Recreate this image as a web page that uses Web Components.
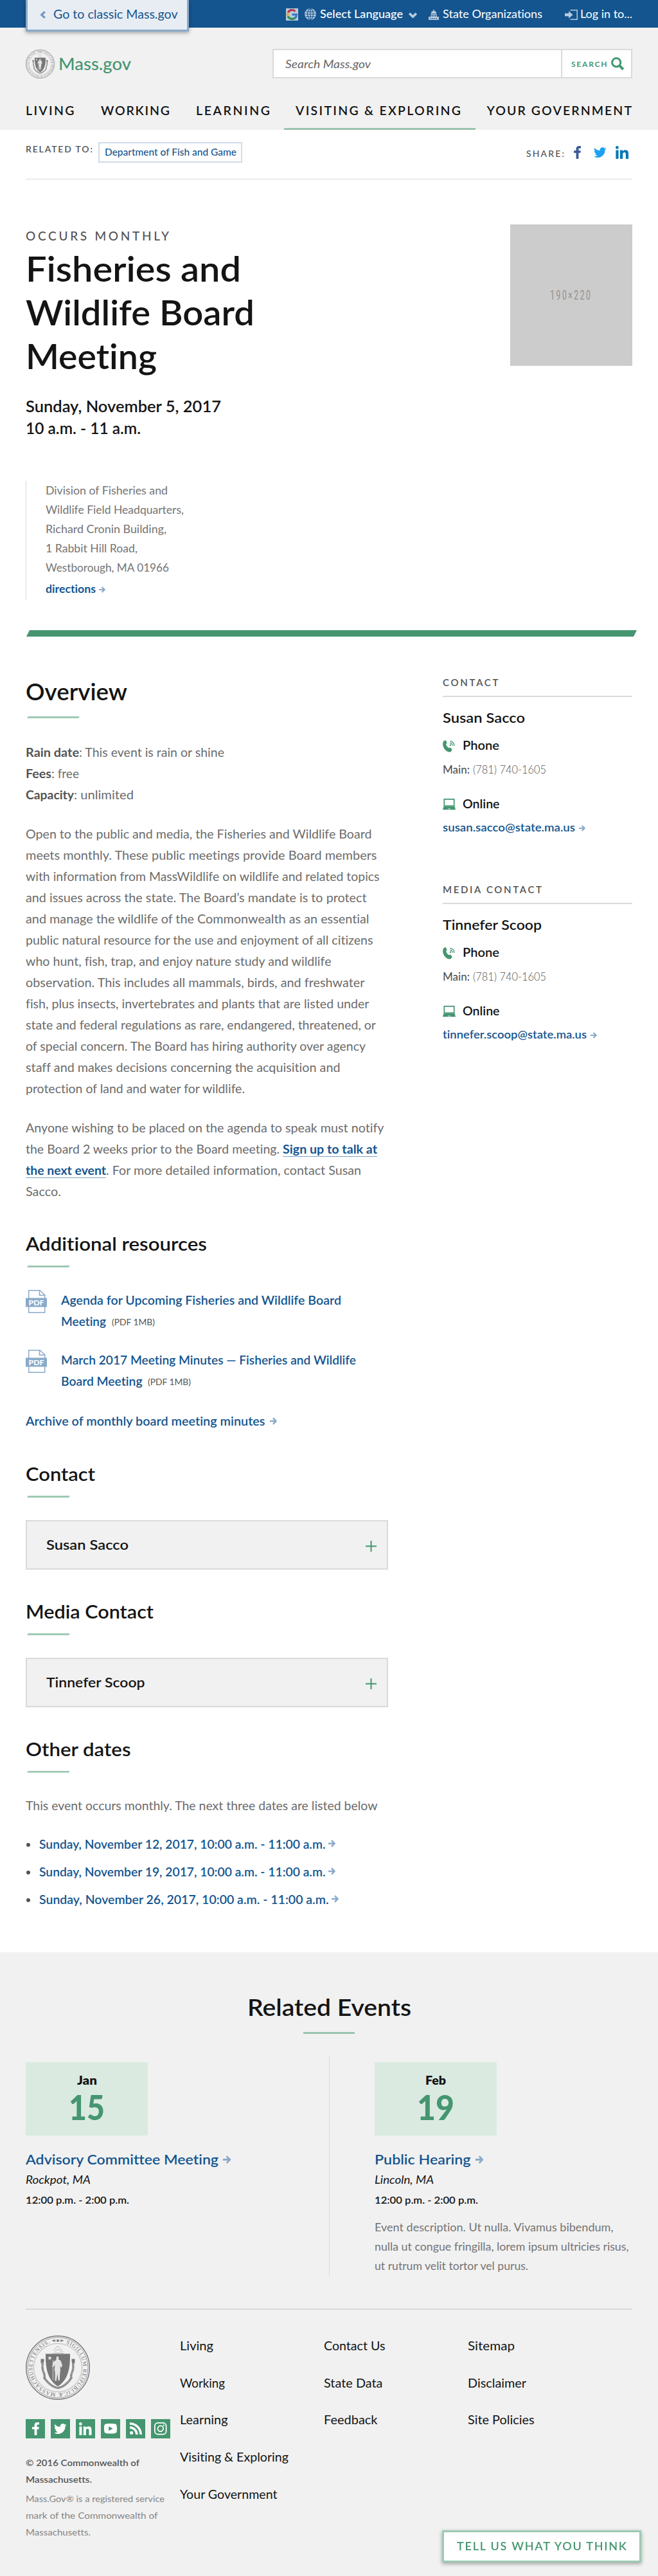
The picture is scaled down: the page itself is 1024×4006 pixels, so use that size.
<!DOCTYPE html>
<html lang="en">
<head>
<meta charset="utf-8">
<title>Fisheries and Wildlife Board Meeting</title>
<style>
html,body{margin:0;padding:0;background:#fff}
body{font-family:Lato,"Open Sans",sans-serif;color:#141414;width:1024px;
--green:#459670;--mint:#9ec9b3;--blue:#14558f;--sky:#8aaac9;--line:#dadada;--gray:#535353;--book:#6c6c6c;--light:#747474}
</style>
</head>
<body>
<mass-page></mass-page>
<script>
const define = (name, css, html) => customElements.define(name, class extends HTMLElement {
  connectedCallback() {
    if (this.shadowRoot) return;
    const t = document.createElement('template');
    t.innerHTML = `<style>:host{display:block}*{box-sizing:border-box}${css}</style>${html}`;
    this.attachShadow({mode: 'open'}).appendChild(t.content.cloneNode(true));
  }
});

/* Icons */
const FB = '<path fill="currentColor" d="M3.6 20v-9.2H0V7.3h3.6V4.6C3.6 1.6 5.4 0 8.2 0c1.3 0 2.300.1 2.800.2v3.200H9.200c-1.500 0-1.800.7-1.800 1.800v2.100H10.800l-.5 3.500H7.400V20z"/>';
const TW = '<path fill="currentColor" d="M19.500 2.200c-.7.300-1.500.500-2.300.600.800-.5 1.500-1.300 1.800-2.200-.8.500-1.600.800-2.500 1A4 4 0 0 0 9.600 5.200C6.300 5 3.400 3.400 1.400 1 .3 2.900.900 5.100 2.600 6.300c-.6 0-1.200-.2-1.800-.5 0 1.900 1.300 3.600 3.200 4-.6.1-1.200.200-1.800.1.500 1.600 2 2.700 3.700 2.800A8 8 0 0 1 0 14.300 11.400 11.400 0 0 0 17.500 4.200c.8-.6 1.500-1.300 2-2z"/>';
const IN = '<path fill="currentColor" d="M.4 6.600h4.100V20H.4zM2.400 0a2.400 2.400 0 1 1 0 4.800 2.400 2.400 0 0 1 0-4.800zM7 6.600h4v1.900c.6-1.100 2-2.200 4-2.200 4.300 0 5 2.800 5 6.400V20h-4.100v-6.500c0-1.600 0-3.600-2.200-3.600S11.100 11.600 11.100 13.400V20H7z"/>';
const ICONS = {
  arrow: ['0 0 11 11', '<path d="M0 5.500h8M5 1l4.500 4.500L5 10" fill="none" stroke="currentColor" stroke-width="2.400"/>'],
  left: ['0 0 9 12', '<path d="M7.800 1.200 2.600 6l5.200 4.800" fill="none" stroke="currentColor" stroke-width="3.200"/>'],
  down: ['0 0 13 10', '<path d="M1.200 1.800 6.500 7l5.300-5.200" fill="none" stroke="currentColor" stroke-width="3.600"/>'],
  google: ['0 0 19 19', '<path fill="#b9cbdd" d="M0 0h19v19H0z"/><g fill="none" stroke-width="3.300"><path stroke="#b23a4c" d="M3.400 6.600C5 2.300 11.500 1.200 14.500 4.700"/><path stroke="#d9a93a" d="M3.300 12.800A8 8 0 0 1 3.300 6.300"/><path stroke="#2f8f5e" d="M3.200 12.500C5.200 17 11.300 17.600 14.300 14.700"/><path stroke="#3f78c4" d="M9.500 9.700h6.900c0 2-.7 3.900-2.300 5.200"/></g>'],
  globe: ['0 0 18 18', '<circle cx="9" cy="9" r="8.900" fill="#b9cbdd"/><g fill="none" stroke="#14558f" stroke-width="1.100"><path d="M9 .5v17M.5 9h17M2 5.200h14M2 12.800h14"/><ellipse cx="9" cy="9" rx="4.400" ry="8.400"/></g>'],
  capitol: ['0 0 16 16', '<path fill="currentColor" d="M7.300 0h1.400v2C11 2.300 12.200 3.900 12.300 6H3.700C3.800 3.900 5 2.300 7.300 2zM3.300 6.700h9.400V8H3.300zM3.500 8.500h1.700v2.500H3.500zM6.100 8.500h1.500v2.500H6.100zM8.500 8.500h1.500v2.500H8.500zM10.900 8.500h1.700v2.500h-1.700zM0 11h16v5H0z"/><path stroke="#14558f" stroke-width="1.500" stroke-dasharray="1.500 1.500" d="M2 13.700h12.500"/>'],
  login: ['0 0 20 16', '<path fill="currentColor" d="M0 5.800h6V2.300L12.500 8 6 13.700v-3.500H0z"/><path fill="none" stroke="currentColor" stroke-width="1.500" d="M8.500.8h10.700v14.400H8.500"/>'],
  search: ['0 0 20 20', '<circle cx="8.200" cy="8.200" r="6.600" fill="none" stroke="currentColor" stroke-width="3"/><path d="m12.700 12.700 6.200 6.200" stroke="currentColor" stroke-width="4"/>'],
  fb: ['0 0 11 20', FB], tw: ['0 0 19.500 16', TW], in: ['0 0 20 20', IN],
  phone: ['0 0 19 19', '<path fill="currentColor" d="M1.200 1.800C2.300.8 4.200-.6 5.100.8l1.300 3c.4 1-.3 1.600-1.200 2.300C5.200 8.500 7.300 11.300 9.400 12.200c.9-.6 1.700-1.100 2.500-.5l2.300 2.200c.9 1.100-.3 2.800-1.600 4C10.500 19.300 6.300 18.300 3.300 14.500.2 10.600-.9 5 1.200 1.800z"/><circle cx="12" cy="7.700" r="1.200" fill="currentColor"/><path fill="none" stroke="currentColor" stroke-width="1.300" d="M11.200 4.500a3.600 3.600 0 0 1 3.900 4.100M11.200 1.700a6.300 6.300 0 0 1 6.500 7.200"/>'],
  laptop: ['0 0 20 18', '<path fill="none" stroke="currentColor" stroke-width="1.700" d="M2.300.9h15.400v10.400H2.300z"/><path fill="currentColor" d="M1.400 12.300h17.200L20 17.700H0z"/><path fill="#fff" opacity=".7" d="M8 15.800h4v1.200H8z"/>'],
  plus: ['0 0 17 17', '<path stroke="currentColor" stroke-width="2" d="M8.500 0v17M0 8.500h17"/>'],
  pdf: ['0 0 33 36', '<path fill="#fff" stroke="#8aaac9" stroke-width="1.500" d="M4.700.8h17.500l7.500 7v27.400H4.700z"/><path fill="none" stroke="#8aaac9" stroke-width="1.500" d="M21.500.8v7.500h8"/><path fill="#8aaac9" d="M0 12.500h33v14H0z"/><text x="16.500" y="23.800" text-anchor="middle" textLength="24" lengthAdjust="spacingAndGlyphs" font-family="Lato" font-size="11.500" font-weight="900" fill="#fff">PDF</text>'],
  yt: ['0 0 20 16', '<path fill="currentColor" d="M4 .3C8 0 12 0 16 .3c3 .2 4 1.500 4 7.700s-1 7.500-4 7.700c-4 .3-8 .3-12 0C1 15.500 0 14.200 0 8S1 .5 4 .3z"/><path fill="#459670" d="m7.200 4.500 6.500 3.500-6.500 3.500z"/>'],
  rss: ['0 0 20 20', '<circle cx="2.800" cy="17.200" r="2.700" fill="currentColor"/><path fill="none" stroke="currentColor" stroke-width="3.700" d="M0 8.500A11.500 11.500 0 0 1 11.500 20M0 2a18 18 0 0 1 18 18"/>'],
  ig: ['0 0 20 20', '<g fill="none" stroke="currentColor" stroke-width="1.800"><rect x=".9" y=".9" width="18.200" height="18.200" rx="5"/><circle cx="10" cy="10" r="4.400"/></g><circle cx="15.200" cy="4.800" r="1.200" fill="currentColor"/>']
};
customElements.define('ui-icon', class extends HTMLElement {
  connectedCallback() {
    if (this.shadowRoot) return;
    const [box, art] = ICONS[this.getAttribute('name')];
    const [w, h] = [this.getAttribute('w'), this.getAttribute('h')];
    this.attachShadow({mode: 'open'}).innerHTML =
      `<style>:host{display:block;flex:none;width:${w}px;height:${h}px}svg{display:block}</style><svg width="${w}" height="${h}" viewBox="${box}" preserveAspectRatio="none">${art}</svg>`;
  }
});

/* State seal */
customElements.define('state-seal', class extends HTMLElement {
  connectedCallback() {
    if (this.shadowRoot) return;
    const s = this.getAttribute('size');
    this.attachShadow({mode: 'open'}).innerHTML = `<style>:host{display:block;flex:none;width:${s}px;height:${s}px}svg{display:block}</style>
<svg width="${s}" height="${s}" viewBox="0 0 100 100">
<defs><path id="ring" d="M50 10.500a39.500 39.500 0 1 1-.01 0"/></defs>
<g fill="none" stroke="#777"><circle cx="50" cy="50" r="49.300" stroke-width="1.400"/><circle cx="50" cy="50" r="47" stroke-width=".7"/><circle cx="50" cy="50" r="37.500" stroke-width="1.200" stroke-dasharray="1 .7" opacity=".65"/></g>
<text font-family="Liberation Serif" font-size="8.500" fill="#6f6f6f"><textPath href="#ring" startOffset="13" textLength="222" lengthAdjust="spacing">SIGILLUM REIPUBLICÆ MASSACHUSETTENSIS.</textPath></text>
<g fill="#777"><circle cx="50" cy="8" r="2"/><path d="m40.500 8 5-2v4zM59.500 8l-5-2v4zM47 7.500h-2v1h2zM53 7.500h2v1h-2z"/></g>
<path fill="none" stroke="#777" stroke-width="3.400" stroke-dasharray="1.600 .4" d="M26 37c1 6-1 11 1 18 2 5 3 8 2 11 5 7 12 14 21 15.500 9-1.500 16-8 21-15.500-1-3 0-6 2-11 2-7 0-12 1-18"/>
<path fill="#777" d="M23.500 36.500h5v4l-5 3zM76.500 36.500h-5v4l5 3z"/>
<path fill="none" stroke="#aaa" stroke-width=".8" d="M42 28c3-1 13-1 17 0M44 24c2-5 4-7 7-7 2 3 5 5 7 9M46 25l4-4 5 4"/>
<path fill="#777" d="M31 28.500h38c.3 20-2 40-19 50.500C33 68.500 30.700 48.500 31 28.500z"/>
<path fill="#f1f1f1" d="m37.500 31.500.8 2.500h2.600l-2.100 1.500.8 2.500-2.100-1.500-2.100 1.500.8-2.500-2.100-1.500h2.600z"/>
<path fill="#e4e4e4" d="M48 33l2-.8 1.500 2-.3 3.300 3.300 1.500 2.600 7.500-2.200 4-1.500-3 .6 6.500-.6 4-.6 12h-2l-1.400-11-1.600 11.500h-2.300l.2-12-.9-5 .6-8-2.400 3.500-2-.6 2.400-7.500 4-3z"/>
<path stroke="#e4e4e4" stroke-width=".8" d="M42.500 38v31"/></svg>`;
  }
});

const SIDE_CSS = `
.cap{margin-top:var(--top,59.200px);color:var(--gray)}
hr{border:0;height:2px;margin:8.800px 0 16.700px;background:var(--line)}
.r{display:flex}.k{margin-top:16px}.m{margin-top:12.400px;color:var(--gray)}
.o{margin-top:28.600px}.e{margin-top:12.500px;color:var(--blue)}
ui-icon{color:var(--green)}.e ui-icon{color:var(--sky);margin:9px 0 0 6px}`;
customElements.define('side-contact', class extends HTMLElement {
  connectedCallback() {
    if (this.shadowRoot) return;
    const a = n => this.getAttribute(n);
    this.attachShadow({mode: 'open'}).innerHTML = `<style>:host{display:block}${SIDE_CSS}</style>
<text-run class="cap" f="15" l="24" wt="600" w="${a('cw')}">${a('cap')}</text-run><hr>
<text-run f="20.500" l="30" wt="600" w="${a('nw')}">${a('name')}</text-run>
<div class="r k"><ui-icon name="phone" w="19" h="19" style="margin-top:4px"></ui-icon><text-run f="19" l="24" wt="600" w="57" style="margin-left:11.500px">Phone</text-run></div>
<div class="r m"><text-run f="18" l="26" wt="500" w="42">Main:</text-run><text-run f="18" l="26" wt="300" w="114" style="margin-left:5px">(781) 740-1605</text-run></div>
<div class="r o"><ui-icon name="laptop" w="20" h="17.500" style="margin-top:4.500px"></ui-icon><text-run f="19" l="24" wt="600" w="57.500" style="margin-left:10.500px">Online</text-run></div>
<div class="r e"><text-run f="17.500" l="26" wt="600" w="${a('ew')}">${a('email')}</text-run><ui-icon name="arrow" w="10" h="10"></ui-icon></div>`;
  }
});

define('section-heading', `i{display:block;width:var(--bar,67px);height:3px;margin:var(--gap,14px) 0 0 2px;background:var(--mint);clip-path:polygon(2px 0,100% 0,calc(100% - 2px) 100%,0 100%)}`, `<slot></slot><i></i>`);
define('contact-accordion', `div{height:77px;border:2px solid var(--line);background:#f1f1f1;display:flex;justify-content:space-between;padding:0 16.500px 0 30px}
ui-icon{margin-top:30px;color:var(--green)}`, `<div><slot></slot><ui-icon name="plus" w="17" h="17"></ui-icon></div>`);

define('site-header', `
.bar{height:43px;background:var(--blue);display:flex;align-items:flex-start;color:#fff}
.tab{width:254px;height:49px;margin-left:40px;border:3px solid var(--sky);border-top:0;background:#e8edf4;color:var(--blue);display:flex;box-shadow:0 2px 6px rgba(0,0,0,.35);padding-left:19px;flex:none;position:relative}
.tab ui-icon{color:#7599bf}
.bar>ui-icon{color:#b9cbdd}
.head{height:159px;background:#f1f1f1;padding:33px 40px 0}
.row{display:flex;height:46px}
.search{margin-left:auto;width:560px;border:2px solid var(--line);background:#fff;display:flex}
.btn{width:109px;margin-left:auto;border-left:2px solid var(--line);display:flex;color:var(--green);padding-left:14px}
nav{display:flex;margin-top:22px}
.on{width:299px;margin-left:21.500px;height:58px;padding-left:18.500px;background:linear-gradient(#9ac2ae,#9ac2ae) bottom/100% 3px no-repeat;clip-path:polygon(0 0,100% 0,100% 95%,298px 100%,0 100%,1px 95%)}`, `
<div class="bar"><div class="tab"><ui-icon name="left" w="9" h="12" style="margin-top:17px"></ui-icon><text-run f="19" l="43" w="193.500" style="margin-left:12px">Go to classic Mass.gov</text-run></div>
<ui-icon name="google" w="19" h="19" style="margin:13px 0 0 151px"></ui-icon><ui-icon name="globe" w="18" h="18" style="margin:13px 0 0 10px"></ui-icon>
<text-run f="18" l="43" wt="500" w="129" style="margin-left:6px">Select Language</text-run><ui-icon name="down" w="13" h="10" style="margin:19px 0 0 9px"></ui-icon>
<ui-icon name="capitol" w="16" h="16" style="margin:15px 0 0 18px"></ui-icon><text-run f="18" l="43" w="155" style="margin-left:6px">State Organizations</text-run>
<ui-icon name="login" w="20" h="16" style="margin:15px 0 0 35px"></ui-icon><text-run f="18" l="43" w="81" style="margin-left:4px">Log in to...</text-run></div>
<div class="head"><div class="row"><state-seal size="45" style="margin-top:1px"></state-seal><text-run f="26" l="46" wt="500" w="113" style="margin-left:6px;color:var(--green)">Mass.gov</text-run>
<div class="search"><text-run f="17.500" l="43" wt="400" w="133" style="margin-left:17.500px;font-style:italic;color:#666">Search Mass.gov</text-run>
<div class="btn"><text-run f="12" l="43" wt="700" w="55.500">SEARCH</text-run><ui-icon name="search" w="20" h="20" style="margin:11px 0 0 6px"></ui-icon></div></div></div>
<nav><text-run f="19.500" l="55" wt="600" w="75.500">LIVING</text-run><text-run f="19.500" l="55" wt="600" w="107" style="margin-left:41.500px">WORKING</text-run><text-run f="19.500" l="55" wt="600" w="115" style="margin-left:41px">LEARNING</text-run>
<div class="on"><text-run f="19.500" l="55" wt="600" w="257">VISITING &amp; EXPLORING</text-run></div><text-run f="19.500" l="55" wt="600" w="225.500" style="margin-left:17px">YOUR GOVERNMENT</text-run></nav></div>`);

define('related-bar', `
.r{display:flex;height:77px;margin:0 40px;border-bottom:1px solid var(--line);align-items:flex-start;color:var(--gray)}
.chip{margin:19px 0 0 9px;width:224px;height:32px;border:2px solid #cfdcea;color:var(--blue);padding-left:8px}`, `
<div class="r"><text-run f="14" l="32" wt="600" w="104" style="margin-top:13.600px">RELATED TO:</text-run><div class="chip"><text-run f="15" l="27" wt="500" w="205">Department of Fish and Game</text-run></div>
<text-run f="14" l="32" wt="500" w="59" style="margin:20.600px 0 0 442px">SHARE:</text-run>
<ui-icon name="fb" w="11" h="20" style="margin:25px 0 0 15px;color:#3b5998"></ui-icon><ui-icon name="tw" w="19.500" h="16" style="margin:27px 0 0 20px;color:#1da1f2"></ui-icon><ui-icon name="in" w="20" h="20" style="margin:25px 0 0 14.500px;color:#0077b5"></ui-icon></div>`);

define('event-hero', `
.h{display:flex;justify-content:space-between;padding:0 40px;height:655.700px}
.img{width:190px;height:220px;margin-top:70px;background:#ccc;color:#969696;display:flex;justify-content:center}
.img span{font:400 21px/220px "Roboto Condensed",Roboto;letter-spacing:3px;transform:scaleX(.7)}
.addr{border-left:1px solid var(--line);height:186px;margin-top:65px;padding-left:30px;color:var(--light)}
.addr div{display:flex;color:var(--blue);margin-top:3.200px}.addr text-run:first-child{margin-top:-.5px}
.bar{width:950px;height:10px;margin:45.300px 0 0 41px;background:var(--green);clip-path:polygon(5px 0,100% 0,calc(100% - 5px) 100%,0 100%)}`, `
<div class="h"><div><text-run f="19" l="30" wt="500" w="223" style="margin-top:72.600px;color:var(--gray)">OCCURS MONTHLY</text-run>
<text-run f="53" l="68" wt="600" w="335" style="margin-top:2.300px">Fisheries and</text-run><text-run f="53" l="68" wt="600" w="356">Wildlife Board</text-run><text-run f="53" l="68" wt="600" w="204">Meeting</text-run>
<text-run f="24" l="34" wt="600" w="304" style="margin-top:26.700px">Sunday, November 5, 2017</text-run><text-run f="24" l="34" wt="600" w="179">10 a.m. - 11 a.m.</text-run>
<div class="addr" style="margin-top:66px"><text-run f="17" l="30" wt="400" w="190">Division of Fisheries and</text-run><text-run f="17" l="30" wt="400" w="215">Wildlife Field Headquarters,</text-run><text-run f="17" l="30" wt="400" w="188">Richard Cronin Building,</text-run><text-run f="17" l="30" wt="400" w="143">1 Rabbit Hill Road,</text-run><text-run f="17" l="30" wt="400" w="192">Westborough, MA 01966</text-run>
<div><text-run f="17" l="30" wt="700" w="78" style="margin-top:0">directions</text-run><ui-icon name="arrow" w="10" h="10" style="color:var(--sky);margin:11px 0 0 5px"></ui-icon></div></div></div>
<div class="img"><span>190×220</span></div></div><div class="bar"></div>`);

const line = (w, t) => `<text-run f="19" l="33" wt="400" w="${w}" style="color:var(--book)">${t}</text-run>`;
const strong = (w, t) => `<text-run f="19" l="33" wt="700" w="${w}">${t}</text-run>`;
const date = (w, t) => `<div class="r d"><b></b><text-run f="19" l="43" wt="600" w="${w}">${t}</text-run><ui-icon name="arrow" w="11" h="12" style="margin:15.500px 0 0 5px"></ui-icon></div>`;
const pdf = (w1, t1, w2, t2) => `<div class="r f"><ui-icon name="pdf" w="33" h="36"></ui-icon><div><text-run f="19" l="33" wt="600" w="${w1}">${t1}</text-run><div class="r"><text-run f="19" l="33" wt="600" w="${w2}">${t2}</text-run><text-run f="13.500" l="33" w="67" style="margin:2px 0 -2px 8.500px;color:var(--gray)">(PDF 1MB)</text-run></div></div></div>`;
const h3 = (w, t, m) => `<section-heading style="margin-top:${m}px"><text-run f="28.500" l="40" wt="600" w="${w}">${t}</text-run></section-heading>`;

define('event-body', `
:host{display:flex;height:2046px;padding:0 40px;box-sizing:border-box;justify-content:space-between;align-items:flex-start}
main{width:564px}aside{width:295px}.r{display:flex}
.t{color:var(--gray)}.bl{color:var(--blue)}.bl ui-icon,.d ui-icon{color:var(--sky)}
u{text-decoration:none;color:var(--blue);display:block;height:29px;border-bottom:1px solid #7ea3c8}
.f{color:var(--blue)}.f>ui-icon{margin-top:1px}.f>div{margin-left:22px}
.d{color:var(--blue)}.d b{width:6px;height:6px;border-radius:50%;background:var(--gray);margin:20px 13.500px 0 1px}`, `
<main><section-heading style="margin-top:61.100px;--bar:82px;--gap:15px"><text-run f="36" l="48" wt="600" w="158">Overview</text-run></section-heading>
<div class="t" style="margin-top:36px"><div class="r">${strong(83,'Rain date')}${line(226,': This event is rain or shine')}</div><div class="r">${strong(40,'Fees')}${line(43,': free')}</div><div class="r">${strong(75,'Capacity')}${line(93,': unlimited')}</div></div>
<div class="t" style="margin-top:27.600px">
${line(538.5,'Open to the public and media, the Fisheries and Wildlife Board')}
${line(546.5,'meets monthly. These public meetings provide Board members')}
${line(550.5,'with information from MassWildlife on wildlife and related topics')}
${line(530.5,'and issues across the state. The Board’s mandate is to protect')}
${line(534.5,'and manage the wildlife of the Commonwealth as an essential')}
${line(540.5,'public natural resource for the use and enjoyment of all citizens')}
${line(475.5,'who hunt, fish, trap, and enjoy nature study and wildlife')}
${line(527.5,'observation. This includes all mammals, birds, and freshwater')}
${line(534.5,'fish, plus insects, invertebrates and plants that are listed under')}
${line(545,'state and federal regulations as rare, endangered, threatened, or')}
${line(529,'of special concern. The Board has hiring authority over agency')}
${line(489.5,'staff and makes decisions concerning the acquisition and')}
${line(341,'protection of land and water for wildlife.')}</div>
<div class="t" style="margin-top:28.400px">
${line(557.5,'Anyone wishing to be placed on the agenda to speak must notify')}
<div class="r">${line(395,'the Board 2 weeks prior to the Board meeting.')}<u style="margin-left:5px">${strong(147,'Sign up to talk at')}</u></div>
<div class="r"><u>${strong(125,'the next event')}</u>${line(397,'. For more detailed information, contact Susan')}</div>
${line(55,'Sacco.')}</div>
${h3(282,'Additional resources',44.85)}
<div style="height:34px"></div>${pdf(436,'Agenda for Upcoming Fisheries and Wildlife Board',70,'Meeting')}<div style="height:27px"></div>${pdf(459,'March 2017 Meeting Minutes — Fisheries and Wildlife',126.5,'Board Meeting')}
<div class="r bl" style="margin-top:29px"><text-run f="19" l="33" wt="600" w="372.500">Archive of monthly board meeting minutes</text-run><ui-icon name="arrow" w="11" h="12" style="margin:11px 0 0 7px"></ui-icon></div>
${h3(108,'Contact',46.2)}<contact-accordion style="margin-top:34.600px"><text-run f="20.500" l="73" wt="600" w="128">Susan Sacco</text-run></contact-accordion>
${h3(199,'Media Contact',45.3)}<contact-accordion style="margin-top:34.700px"><text-run f="20.500" l="73" wt="600" w="153.500">Tinnefer Scoop</text-run></contact-accordion>
${h3(163.5,'Other dates',45)}
<div class="t" style="margin:34px 0 22px">${line(547.5,'This event occurs monthly. The next three dates are listed below')}</div>
${date(445.5,'Sunday, November 12, 2017, 10:00 a.m. - 11:00 a.m.')}${date(445.5,'Sunday, November 19, 2017, 10:00 a.m. - 11:00 a.m.')}${date(450.5,'Sunday, November 26, 2017, 10:00 a.m. - 11:00 a.m.')}
</main><aside><side-contact cap="CONTACT" cw="86.500" name="Susan Sacco" nw="128" email="susan.sacco@state.ma.us" ew="206"></side-contact>
<side-contact style="--top:71px" cap="MEDIA CONTACT" cw="154" name="Tinnefer Scoop" nw="154" email="tinnefer.scoop@state.ma.us" ew="224"></side-contact></aside>`);

const ev = (mw, m, dw, d, tw, t, pw, p) => `<div class="date"><text-run f="19" l="30" wt="800" w="${mw}" style="margin-top:12.600px">${m}</text-run><text-run f="54" l="56" wt="900" w="${dw}" style="margin-top:-1px;color:var(--green)">${d}</text-run></div>
<div class="r"><text-run f="20.500" l="30" wt="600" w="${tw}">${t}</text-run><ui-icon name="arrow" w="12.500" h="13" style="margin:9px 0 0 7px"></ui-icon></div>
<text-run f="17" l="30" w="${pw}" style="margin-top:2.300px;font-style:italic">${p}</text-run><text-run f="15.500" l="26" wt="600" w="161" style="margin-top:2.600px">12:00 p.m. - 2:00 p.m.</text-run>`;
define('related-events', `
:host{background:#f1f1f1;padding:61px 40px 50px}.r{display:flex;color:var(--blue);margin-top:22px}.r ui-icon{color:var(--sky)}
header{display:flex;flex-direction:column;align-items:center}header i{width:80px;height:3px;background:#9ac5b0;margin-top:15px}
.cols{display:flex;margin-top:35px;height:342px}.a{width:473px;border-right:1px solid var(--line);padding-top:9px}.b{padding:9px 0 0 70px}
.date{width:190px;height:114px;background:#daeae1;display:flex;flex-direction:column;align-items:center}
.x{margin-top:15.400px;color:var(--light)}`, `
<header><text-run f="36" l="48" wt="600" w="255">Related Events</text-run><i></i></header>
<div class="cols"><div class="a">${ev(31,'Jan',56,'15',300,'Advisory Committee Meeting',101,'Rockpot, MA')}</div>
<div class="b">${ev(32,'Feb',58,'19',149.500,'Public Hearing',92,'Lincoln, MA')}<div class="x"><text-run f="17" l="30" wt="400" w="371.500">Event description. Ut nulla. Vivamus bibendum,</text-run><text-run f="17" l="30" wt="400" w="395.500">nulla ut congue fringilla, lorem ipsum ultricies risus,</text-run><text-run f="17" l="30" wt="400" w="239">ut rutrum velit tortor vel purus.</text-run></div></div></div>`);

const link = (w, t) => `<text-run f="19" l="57.750" w="${w}">${t}</text-run>`;
define('site-footer', `
:host{background:#f1f1f1;height:416px;padding:0 40px;box-sizing:border-box}
.f{border-top:2px solid var(--line);display:flex}.l{width:240px;padding-top:40px;flex:none}
.s{display:flex;gap:9px;margin-top:30px}.s span{width:30px;height:30px;background:var(--green);color:#fff;display:flex;align-items:center;justify-content:center;flex:none}
.c{width:224px;padding-top:26.800px}.n{margin-top:24.600px;color:var(--gray)}.g{margin-top:4px;color:#858585}`, `
<div class="f"><div class="l"><state-seal size="100"></state-seal>
<div class="s"><span><ui-icon name="fb" w="11" h="20"></ui-icon></span><span><ui-icon name="tw" w="19.500" h="16"></ui-icon></span><span><ui-icon name="in" w="19.500" h="20"></ui-icon></span><span><ui-icon name="yt" w="20" h="15.500"></ui-icon></span><span><ui-icon name="rss" w="19" h="19"></ui-icon></span><span><ui-icon name="ig" w="19.500" h="19.500"></ui-icon></span></div>
<div class="n"><text-run f="14" l="26" wt="600" w="177">© 2016 Commonwealth of</text-run><text-run f="14" l="26" wt="600" w="103">Massachusetts.</text-run></div>
<div class="g"><text-run f="14" l="26" wt="400" w="216">Mass.Gov® is a registered service</text-run><text-run f="14" l="26" wt="400" w="205.500">mark of the Commonwealth of</text-run><text-run f="14" l="26" wt="400" w="101">Massachusetts.</text-run></div></div>
<div class="c">${link(52,'Living')}${link(70,'Working')}${link(74.5,'Learning')}${link(169,'Visiting &amp; Exploring')}${link(151.5,'Your Government')}</div>
<div class="c">${link(95.5,'Contact Us')}${link(91.5,'State Data')}${link(83.5,'Feedback')}</div>
<div class="c">${link(73,'Sitemap')}${link(91,'Disclaimer')}${link(103.5,'Site Policies')}</div></div>`);

define('feedback-button', `:host{position:fixed;right:26px;bottom:21px;width:310px;height:50px;box-sizing:border-box;border:3px solid var(--mint);background:#fff;color:var(--green);box-shadow:0 2px 6px rgba(0,0,0,.35)}`, `<text-run f="18" l="42" wt="600" w="264" style="margin-left:20px">TELL US WHAT YOU THINK</text-run>`);

define('mass-page', ``, `<site-header></site-header><related-bar></related-bar><event-hero></event-hero><event-body></event-body><related-events></related-events><site-footer></site-footer><feedback-button></feedback-button>`);

/* One line of copy set to its measure: capitals are tracked, mixed case is widened. */
customElements.define('text-run', class extends HTMLElement {
  connectedCallback() {
    if (this.shadowRoot) return;
    const a = n => this.getAttribute(n), w = +a('w');
    const root = this.attachShadow({mode: 'open'});
    root.innerHTML = `<style>:host{display:block;flex:none;white-space:pre;width:${w}px;font-size:${a('f')}px;line-height:${a('l')}px;height:${a('l')}px;font-weight:${a('wt') || 400};font-variant-ligatures:none}span{display:inline-block;vertical-align:top;transform-origin:0 50%}</style><span><slot></slot></span>`;
    const span = root.querySelector('span'), text = this.textContent;
    const natural = span.getBoundingClientRect().width;
    if (/[a-z0-9]/.test(text)) span.style.transform = `scaleX(${(w / natural).toFixed(4)})`;
    else span.style.letterSpacing = ((w - natural) / (text.length - 1)).toFixed(3) + 'px';
  }
});
</script>
</body>
</html>
